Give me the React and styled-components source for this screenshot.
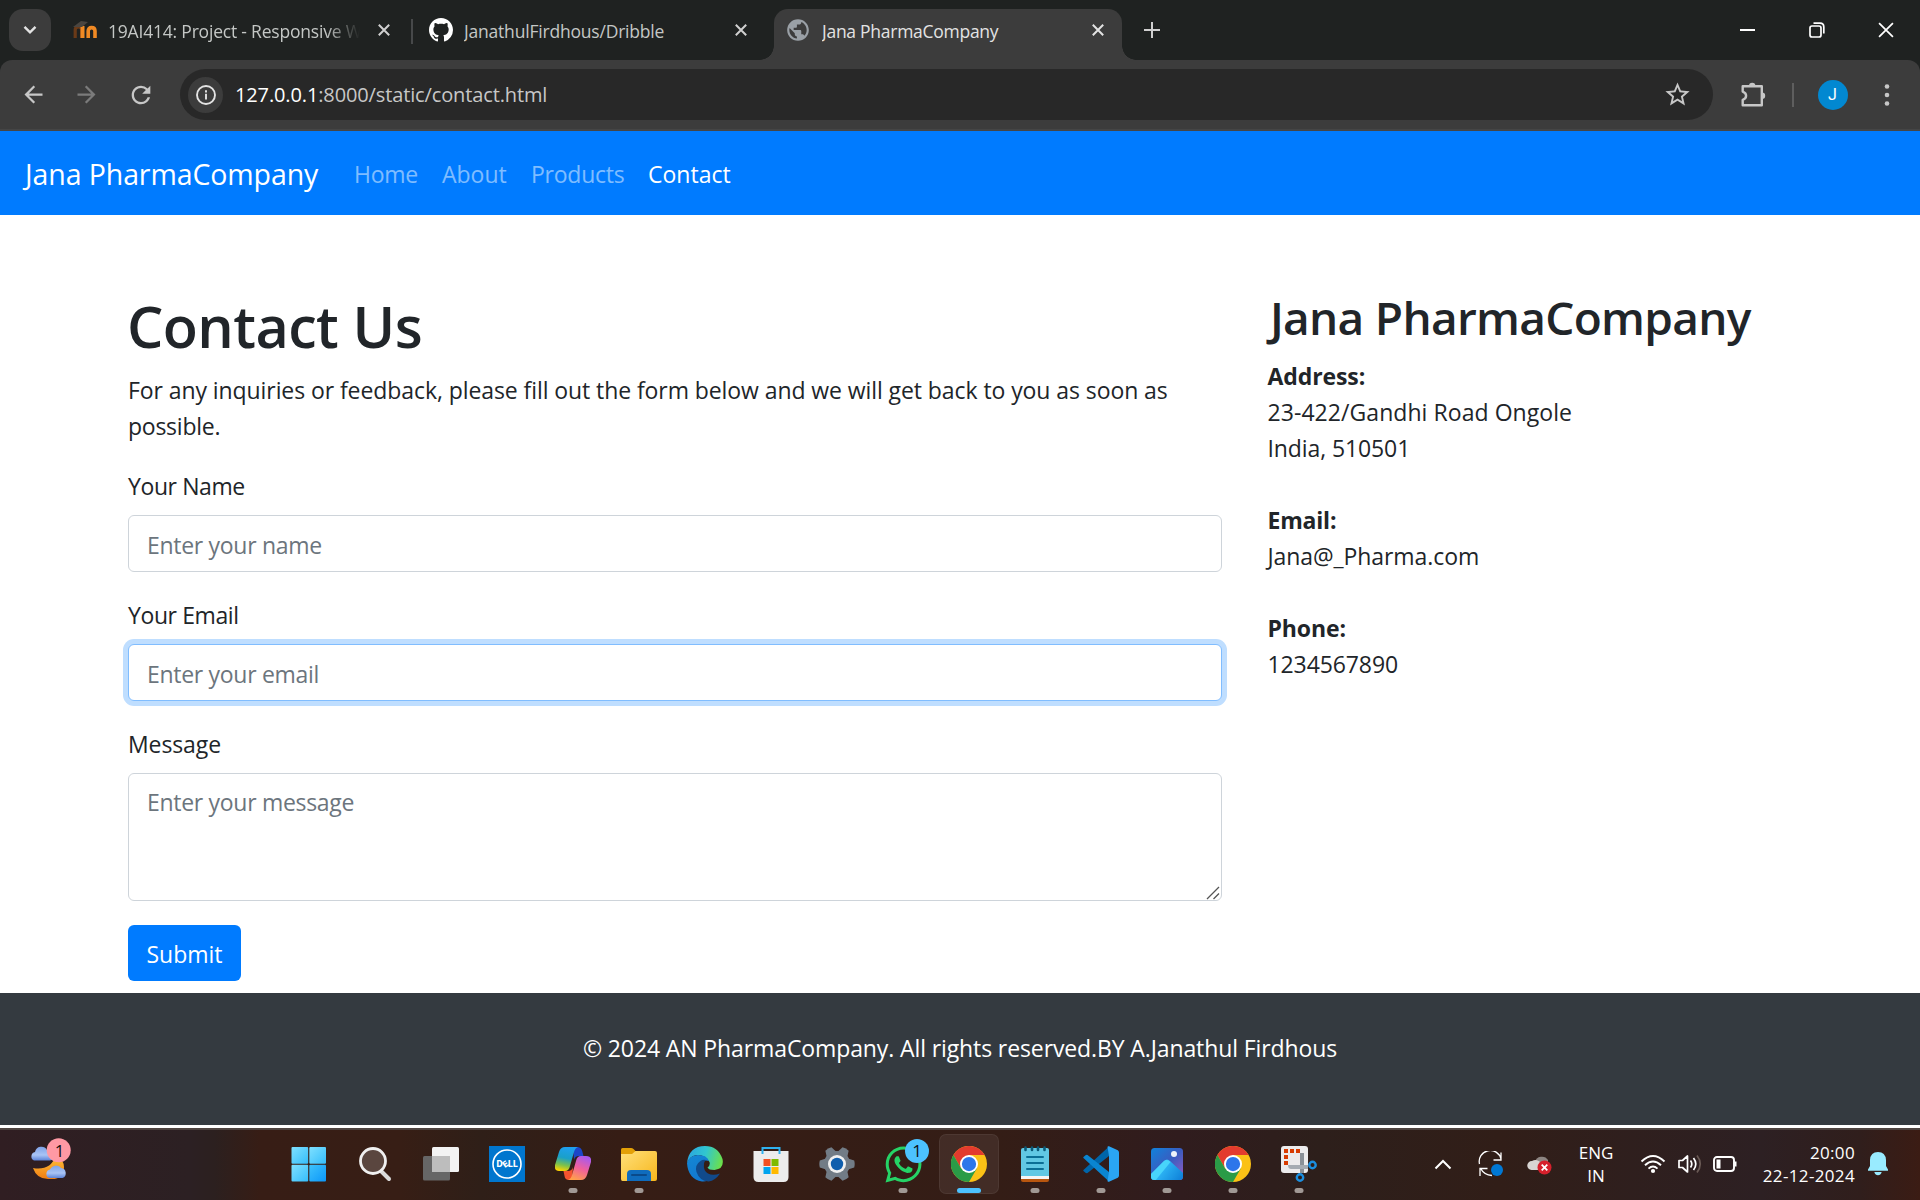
import React from "react";
import styled, { createGlobalStyle, css } from "styled-components";
import { MdPublic, MdArrowBack, MdArrowForward, MdRefresh, MdStarBorder } from "react-icons/md";
import { FaWhatsapp } from "react-icons/fa";

const GlobalStyle = createGlobalStyle`
  *, *::before, *::after { box-sizing: border-box; }
  body {
    margin: 0;
    overflow: hidden;
    background: #fff;
    color: #212529;
    font-family: "Open Sans", "Noto Sans", sans-serif;
    font-size: 23px;
    line-height: 36px;
  }
  svg { display: block; flex: none; }
`;

const Screen = styled.div`
  display: flex;
  flex-direction: column;
  width: 1920px;
  height: 1200px;
  overflow: hidden;
`;

/* ---------- Browser tab strip ---------- */

const TabStrip = styled.div`
  display: flex;
  align-items: center;
  flex: none;
  height: 60px;
  padding-left: 9px;
  background: #1f2221;
`;

const TabSearch = styled.div`
  display: grid;
  place-items: center;
  width: 42px;
  height: 42px;
  margin-right: 9px;
  border-radius: 14px;
  background: #3c3c3c;
`;

const Tab = styled.div`
  position: relative;
  display: flex;
  align-items: center;
  height: 51px;
  margin-top: 9px;
  padding: 0 ${(p) => p.$end}px 9px ${(p) => p.$start}px;
  width: ${(p) => p.$w}px;
  color: #c4c7c5;
  font-size: 17.5px;
  line-height: 24px;
  ${(p) =>
    p.$active &&
    css`
      color: #e3e3e3;
      background: #3c3c3c;
      border-radius: 14px 14px 0 0;
      &::before,
      &::after {
        content: "";
        position: absolute;
        bottom: 0;
        width: 14px;
        height: 14px;
      }
      &::before {
        right: 100%;
        background: radial-gradient(circle at 0 0, transparent 13.5px, #3c3c3c 14px);
      }
      &::after {
        left: 100%;
        background: radial-gradient(circle at 100% 0, transparent 13.5px, #3c3c3c 14px);
      }
    `}
`;

const TabTitle = styled.span`
  flex: 1;
  margin-left: 11px;
  padding-top: 2px;
  white-space: nowrap;
  overflow: hidden;
  letter-spacing: ${(p) => p.$ls || 0}px;
  ${(p) =>
    p.$fade &&
    css`
      margin-right: 18px;
      mask-image: linear-gradient(to right, #000 calc(100% - 34px), transparent);
    `}
`;

const TabDivider = styled.div`
  width: 2px;
  height: 25px;
  margin-top: 2px;
  background: #47494a;
`;

const NewTab = styled.div`
  display: grid;
  place-items: center;
  width: 60px;
  height: 60px;
`;

const WindowControls = styled.div`
  display: flex;
  margin-left: auto;
`;

const WindowButton = styled.div`
  display: grid;
  place-items: center;
  width: 69px;
  height: 60px;
`;

/* ---------- Browser toolbar ---------- */

const ToolbarBack = styled.div`
  flex: none;
  background: #1f2221;
`;

const Toolbar = styled.div`
  display: flex;
  align-items: center;
  height: 71px;
  padding-left: 3px;
  background: #3c3c3c;
  border-bottom: 2px solid #454545;
  border-radius: 12px 12px 0 0;
`;

const ToolButton = styled.div`
  display: grid;
  place-items: center;
  width: ${(p) => p.$w || 54}px;
  height: 51px;
  color: ${(p) => (p.$dim ? "#7b7b7b" : "#c7c7c7")};
`;

const AddressBar = styled.div`
  display: flex;
  align-items: center;
  width: 1533px;
  height: 51px;
  margin-left: 9px;
  padding: 0 21px 0 8px;
  border-radius: 26px;
  background: #282828;
  color: #c7c7c7;
`;

const SiteInfo = styled.div`
  display: grid;
  place-items: center;
  width: 35px;
  height: 36px;
  border-radius: 50%;
  background: #3c3c3c;
`;

const Url = styled.div`
  flex: 1;
  margin-left: 12px;
  font-size: 20px;
  line-height: 28px;
  letter-spacing: -0.13px;
  b {
    font-weight: 400;
    color: #fff;
  }
`;

const ToolDivider = styled.div`
  width: 2px;
  height: 24px;
  background: #5e5e5e;
`;

const Avatar = styled.div`
  display: grid;
  place-items: center;
  width: 30px;
  height: 30px;
  border-radius: 50%;
  background: #0288d1;
  color: #fff;
  font-family: Roboto, sans-serif;
  font-size: 16px;
  line-height: 30px;
`;

/* ---------- Site ---------- */

const Navbar = styled.nav`
  display: flex;
  align-items: center;
  flex: none;
  height: 84px;
  padding-left: 25px;
  background: #007bff;
`;

const Brand = styled.span`
  width: 317px;
  margin-top: 2px;
  color: #fff;
  font-size: 28.5px;
  line-height: 45px;
  letter-spacing: ${(p) => p.$ls}px;
  white-space: nowrap;
`;

const NavLinks = styled.div`
  display: flex;
  gap: 24px;
  margin-top: 2px;
  padding-left: 12px;
`;

const NavLink = styled.span`
  width: ${(p) => p.$w}px;
  white-space: nowrap;
  color: ${(p) => (p.$active ? "#fff" : "rgba(255, 255, 255, 0.5)")};
  letter-spacing: ${(p) => p.$ls || 0}px;
`;

const Main = styled.main`
  display: flex;
  align-items: flex-start;
  flex: none;
  height: 778px;
  padding: 72px 128px 0;
  gap: 45px;
`;

const FormColumn = styled.section`
  width: 1094px;
`;

const InfoColumn = styled.section`
  width: 520px;
`;

const Title = styled.h1`
  margin: 0 0 12px -1px;
  padding-top: 3px;
  height: 72px;
  font-size: 57.5px;
  line-height: 72px;
  font-weight: 600;
  letter-spacing: ${(p) => p.$ls}px;
`;

const Subtitle = styled.h2`
  margin: 0 0 12px;
  padding: 1px 0 0 3px;
  height: 58px;
  font-size: 46px;
  line-height: 58px;
  font-weight: 600;
  letter-spacing: ${(p) => p.$ls}px;
  white-space: nowrap;
`;

const Paragraph = styled.p`
  margin: 0 0 24px;
  padding-top: 1px;
  height: 72px;
  white-space: nowrap;
`;

const Line = styled.span`
  display: block;
  letter-spacing: ${(p) => p.$ls || 0}px;
  font-weight: ${(p) => (p.$bold ? 700 : 400)};
`;

const Details = styled.div`
  display: grid;
  gap: 36px;
  padding: 1px 0 0 0.5px;
  white-space: nowrap;
`;

const Field = styled.div`
  position: relative;
  display: flex;
  flex-direction: column;
  margin-bottom: 24px;
`;

const Label = styled.label`
  height: 36px;
  margin-bottom: 12px;
  padding-top: 1px;
  letter-spacing: ${(p) => p.$ls || 0}px;
`;

const control = css`
  display: block;
  width: 100%;
  margin: 0;
  border: 1px solid #ced4da;
  border-radius: 6px;
  outline: none;
  background: #fff;
  color: #495057;
  font: inherit;
  letter-spacing: -0.3px;
  &::placeholder {
    color: #6c757d;
    opacity: 1;
  }
`;

const Input = styled.input`
  ${control}
  height: 57px;
  padding: 11px 18px 9px;
  ${(p) =>
    p.$focused &&
    css`
      border-color: #80bdff;
      box-shadow: 0 0 0 5px #bfdeff;
    `}
`;

const TextArea = styled.textarea`
  ${control}
  height: 128px;
  padding: 10px 18px;
  resize: none;
`;

const Grip = styled.svg`
  position: absolute;
  right: 2px;
  bottom: 1px;
`;

const Submit = styled.button`
  display: block;
  width: 113px;
  height: 56px;
  padding: 2px 0 0;
  border: 0;
  border-radius: 6px;
  background: #007bff;
  color: #fff;
  font: inherit;
`;

const Footer = styled.footer`
  flex: none;
  height: 132px;
  padding-top: 37px;
  background: #343a40;
  color: #fff;
  text-align: center;
  letter-spacing: ${(p) => p.$ls || 0}px;
`;

/* ---------- Taskbar ---------- */

const Taskbar = styled.div`
  display: flex;
  flex: none;
  height: 72px;
  margin-top: 3px;
  border-top: 2px solid #4e4340;
  background: linear-gradient(
    90deg,
    #301e22 0,
    #2c2023 190px,
    #2c201f 215px,
    #371d15 260px,
    #371e15 400px,
    #2f1f18 480px,
    #361d15 620px,
    #341d16 1000px,
    #301c1e 1180px,
    #2d1f1b 1320px,
    #311e18 1500px,
    #2d2023 1760px,
    #301e1c 1860px,
    #3b1c14 1920px
  );
`;

const Weather = styled.div`
  width: 276px;
  padding: 12px 0 0 29px;
  svg {
    overflow: visible;
  }
`;

const Apps = styled.div`
  display: flex;
`;

const AppSlot = styled.div`
  position: relative;
  display: grid;
  place-items: center;
  width: 60px;
  height: 60px;
  margin: 4px 3px 0;
  border-radius: 7px;
  ${(p) =>
    p.$active &&
    css`
      background: rgba(255, 255, 255, 0.07);
      box-shadow: inset 0 0 0 1px rgba(255, 255, 255, 0.06);
    `}
`;

const RunMark = styled.span`
  position: absolute;
  left: 50%;
  bottom: 1px;
  width: ${(p) => (p.$active ? 24 : 9)}px;
  height: 5px;
  transform: translateX(-50%);
  border-radius: 3px;
  background: ${(p) => (p.$active ? "#4cc2ff" : "#a19995")};
`;

const Badge = styled.span`
  position: absolute;
  top: 5px;
  right: 4px;
  width: 24px;
  height: 24px;
  border-radius: 50%;
  background: #4cc2ff;
  color: #111;
  font-size: 17px;
  line-height: 24px;
  text-align: center;
`;

const Tray = styled.div`
  display: flex;
  align-items: center;
  margin-left: auto;
  height: 68px;
  padding-right: 19px;
  color: #fff;
  font-size: 17px;
  line-height: 23px;
`;

const TrayItem = styled.div`
  display: grid;
  place-items: center;
  width: ${(p) => p.$w}px;
`;

const TrayText = styled.div`
  width: ${(p) => p.$w}px;
  padding-bottom: 1px;
  text-align: ${(p) => p.$align || "center"};
  white-space: nowrap;
  letter-spacing: ${(p) => p.$ls || 0}px;
`;

/* ---------- Drawings ---------- */

const Cross = ({ size = 12, w = 2, color = "#d0d0d0" }) => (
  <svg width={size} height={size} viewBox="0 0 12 12">
    <path d="M.8.8l10.4 10.4M11.2.8L.8 11.2" stroke={color} strokeWidth={w} />
  </svg>
);

const Moodle = () => (
  <svg width="25" height="24" viewBox="0 0 25 24">
    <path d="M3.2 20V12q0-3.2 3.2-3.2T9.7 12v8" fill="none" stroke="#6a3a18" strokeWidth="3.2" />
    <path d="M10.5 20V8" stroke="#f08a24" strokeWidth="4" />
    <path d="M16.2 20v-7q0-3.4 3.4-3.4T23 13v7" fill="none" stroke="#f08a24" strokeWidth="3.600" />
    <path d="M1 9L9 3l7 1-6 5z" fill="#4a4540" />
  </svg>
);

const Github = () => (
  <svg width="24" height="24" viewBox="0 0 16 16" fill="#fff">
    <path d="M8 0C3.580 0 0 3.580 0 8c0 3.540 2.290 6.530 5.470 7.590.4.070.550-.170.550-.380 0-.190-.010-.820-.010-1.490-2.010.370-2.530-.490-2.690-.940-.090-.230-.480-.940-.820-1.130-.280-.150-.680-.520-.010-.530.630-.010 1.080.580 1.230.820.720 1.210 1.870.870 2.330.660.070-.520.280-.870.510-1.070-1.780-.2-3.640-.890-3.640-3.950 0-.870.310-1.590.820-2.150-.080-.2-.360-1.020.080-2.120 0 0 .670-.210 2.200.820.640-.180 1.320-.270 2-.270s1.360.090 2 .270c1.530-1.040 2.200-.820 2.200-.820.440 1.100.160 1.920.080 2.120.510.560.820 1.270.820 2.150 0 3.070-1.870 3.750-3.650 3.950.290.250.540.730.540 1.480 0 1.070-.010 1.930-.010 2.200 0 .210.150.460.550.380A8.010 8.010 0 0 0 16 8c0-4.420-3.580-8-8-8z" />
  </svg>
);

const Puzzle = () => (
  <svg width="26" height="28" viewBox="0 0 26 28" fill="none" stroke="#c7c7c7" strokeWidth="2.400">
    <path d="M2.700 5.200h19.100v19H2.700v-5.400q3.400-1.200 3.400-4.100t-3.400-4.100z" strokeLinejoin="round" />
    <path d="M9 5a3.200 3.200 0 0 1 6.400 0zM22 11.500a3.200 3.200 0 0 1 0 6.400z" fill="#c7c7c7" stroke="none" />
  </svg>
);

const WeatherIcon = () => (
  <svg width="44" height="46" viewBox="0 0 44 46">
    <defs>
      <linearGradient id="cloud" x1="0" y1="0" x2="0" y2="1">
        <stop offset="0" stopColor="#7fa3e8" />
        <stop offset=".6" stopColor="#a9c4f5" />
        <stop offset="1" stopColor="#5c83d8" />
      </linearGradient>
      <linearGradient id="moon" x1="0" y1="0" x2="0" y2="1">
        <stop offset="0" stopColor="#ffc23a" />
        <stop offset="1" stopColor="#f07d12" />
      </linearGradient>
    </defs>
    <path d="M4 26q17 3 23-12 8 4 8 11 0 13-14 12Q8 38 4 26z" fill="url(#moon)" />
    <path d="M5 18.500a4.500 4.500 0 0 1 1-8.500 6.500 6.500 0 0 1 12-2 5 5 0 0 1 3 10.500z" fill="url(#cloud)" />
    <path d="M20 36a4.500 4.500 0 0 1 1-8.500 6.500 6.500 0 0 1 11-1.500 5.200 5.200 0 0 1 1.500 10z" fill="url(#cloud)" />
    <circle cx="29.700" cy="8.300" r="12" fill="#ff99a4" />
    <text x="30.500" y="14.500" fontSize="17" fill="#111" textAnchor="middle">1</text>
  </svg>
);

const Start = () => (
  <svg width="36" height="36" viewBox="0 0 36 36">
    <defs>
      <linearGradient id="win" x1="0" y1="0" x2="1" y2="1">
        <stop offset="0" stopColor="#7fe0ff" />
        <stop offset="1" stopColor="#35bdfb" />
      </linearGradient>
      <linearGradient id="win2" x1="0" y1="0" x2="1" y2="1">
        <stop offset="0" stopColor="#3ec2fc" />
        <stop offset="1" stopColor="#0c97f8" />
      </linearGradient>
    </defs>
    <rect x=".5" y="1" width="16.700" height="16.700" rx="1" fill="url(#win)" />
    <rect x="18.300" y="1" width="16.700" height="16.700" rx="1" fill="url(#win)" />
    <rect x=".5" y="18.800" width="16.700" height="16.700" rx="1" fill="url(#win)" />
    <rect x="18.300" y="18.800" width="16.700" height="16.700" rx="1" fill="url(#win2)" />
  </svg>
);

const Search = () => (
  <svg width="36" height="36" viewBox="0 0 36 36">
    <path d="M24 25l8 8" stroke="#dcdcdc" strokeWidth="4" strokeLinecap="round" />
    <circle cx="16" cy="15" r="12.500" fill="#5a463f" stroke="#f0f0f0" strokeWidth="2.800" />
  </svg>
);

const TaskView = () => (
  <svg width="36" height="36" viewBox="0 0 36 36">
    <rect x="9" y="1" width="27" height="25" rx="1.500" fill="#f3f3f3" />
    <rect x="0" y="10" width="27" height="24.500" rx="1.500" fill="#666" />
    <path d="M9 10h18v16H9z" fill="#bdbdbd" />
  </svg>
);

const Dell = () => (
  <svg width="36" height="36" viewBox="0 0 36 36">
    <path d="M0 0h36v36H0z" fill="#0076ce" />
    <circle cx="18" cy="18" r="14" fill="none" stroke="#fff" strokeWidth="1.600" />
    <g fill="#fff" fontFamily="Inter, sans-serif" fontWeight="800" fontSize="8.500" textAnchor="middle">
      <text x="10.500" y="21">D</text>
      <text x="16.500" y="21" transform="rotate(-35 16.500 18)">E</text>
      <text x="21.500" y="21">L</text>
      <text x="26.500" y="21">L</text>
    </g>
  </svg>
);

const Copilot = () => (
  <svg width="36" height="36" viewBox="0 0 36 36">
    <defs>
      <linearGradient id="cpA" x1=".5" y1="0" x2=".3" y2="1">
        <stop offset="0" stopColor="#1f9ff0" />
        <stop offset=".45" stopColor="#1aa0c8" />
        <stop offset=".75" stopColor="#7cc14c" />
        <stop offset="1" stopColor="#ffd400" />
      </linearGradient>
      <linearGradient id="cpB" x1=".7" y1="0" x2=".3" y2="1">
        <stop offset="0" stopColor="#a659f0" />
        <stop offset=".5" stopColor="#f0609c" />
        <stop offset="1" stopColor="#ffa04a" />
      </linearGradient>
    </defs>
    <path d="M18 1h4q4 0 5.200 4l1.300 5H24q-4 0-5 4z" fill="#1b45c8" />
    <path d="M17 34h-3q-4 0-4.500-4l-1-5H13q4 0 5-4z" fill="#f5532f" />
    <path d="M10 1h13q-3 1-4 5l-4 14q-1 5-5 5H4q-5 0-4-6L4 6q1.500-5 6-5z" fill="url(#cpA)" />
    <path d="M26 34H13q3-1 4-5l4-14q1-5 5-5h5q6 0 5 6l-4 13q-1.500 5-6 5z" fill="url(#cpB)" />
  </svg>
);

const Explorer = () => (
  <svg width="36" height="36" viewBox="0 0 36 36">
    <defs>
      <linearGradient id="fold" x1="0" y1="0" x2="1" y2="1">
        <stop offset="0" stopColor="#ffe07a" />
        <stop offset="1" stopColor="#f7b61c" />
      </linearGradient>
    </defs>
    <path d="M0 3.500Q0 2 1.500 2H10q1.500 0 2.500 1l3 3v4H0z" fill="#e3a007" />
    <path d="M0 8h11l3.500-3H34q2 0 2 2v26q0 2-2 2H1.500Q0 35 0 33z" fill="url(#fold)" />
    <path d="M6 35v-7q0-4 4-4h16q4 0 4 4v7z" fill="#0f6cbd" />
    <path d="M11 29h14" stroke="#0a4a8a" strokeWidth="2" strokeLinecap="round" />
  </svg>
);

const Edge = () => (
  <svg width="36" height="36" viewBox="0 0 36 36">
    <defs>
      <linearGradient id="edA" x1="0" y1=".3" x2="1" y2=".5">
        <stop offset="0" stopColor="#2aa5e0" />
        <stop offset=".5" stopColor="#31c6cf" />
        <stop offset="1" stopColor="#6be04c" />
      </linearGradient>
      <linearGradient id="edB" x1=".2" y1="0" x2=".6" y2="1">
        <stop offset="0" stopColor="#1486d4" />
        <stop offset="1" stopColor="#1277cf" />
      </linearGradient>
    </defs>
    <path d="M0 17Q2 0 18 0q13 0 17.500 13 2 10-8 11-6 0-7-2.500 3-2 2-5.500Q18 8 9 9 3 10 0 17z" fill="url(#edA)" />
    <path d="M0 17q3-8 11-8 9 0 11 6-7-2-9 5-1 9 8 14-3 2-6 1.500Q1 33 0 17z" fill="url(#edB)" />
    <path d="M13.500 15q-6 4-4 11 3 9 12 9.500 7-1 11.500-8-7 2.500-12 0-5-3-4-10 0-2 2-3.500-3-1-5.500 1z" fill="#114a8b" />
  </svg>
);

const Store = () => (
  <svg width="36" height="36" viewBox="0 0 36 36">
    <path d="M.5 5h35v26q0 5-5 5h-25q-5 0-5-5z" fill="#ececec" />
    <path d="M9.500 8V2h17v6" fill="none" stroke="#2fb2f0" strokeWidth="2" />
    <path d="M10.500 13h7v7h-7z" fill="#f25022" />
    <path d="M18.500 13h7v7h-7z" fill="#7fba00" />
    <path d="M10.500 21h7v7h-7z" fill="#00a4ef" />
    <path d="M18.500 21h7v7h-7z" fill="#ffb900" />
  </svg>
);

const Settings = () => (
  <svg width="36" height="36" viewBox="0 0 36 36">
    <g fill="#727c86">
      <circle cx="18" cy="18" r="13" />
      {[30, 90, 150, 210, 270, 330].map((angle) => (
        <path key={angle} d="M14.500.8q3.500-1 7 0l2.200 7H12.300z" transform={`rotate(${angle} 18 18)`} />
      ))}
    </g>
    <circle cx="18" cy="18" r="9" fill="#f0f0f0" />
    <circle cx="18" cy="18" r="6.200" fill="#0f5ead" />
  </svg>
);

const Chrome = () => (
  <svg width="36" height="36" viewBox="0 0 48 48">
    <circle cx="24" cy="24" r="24" fill="#fbc116" />
    <path d="M24 12h20.800A24 24 0 0 0 3.200 12L13.600 30z" fill="#e33b2e" />
    <path d="M13.600 30L3.200 12A24 24 0 0 0 24 48l10.400-18z" fill="#2a9b47" />
    <circle cx="24" cy="24" r="12" fill="#fff" />
    <circle cx="24" cy="24" r="9.500" fill="#2d76ea" />
  </svg>
);

const Notepad = () => (
  <svg width="36" height="36" viewBox="0 0 36 36">
    <path d="M4 31h28v3q0 2-2 2H6q-2 0-2-2z" fill="#b8560f" />
    <path d="M4 30h28v3H4z" fill="#f5f5f5" />
    <path d="M4 4q0-2 2-2h24q2 0 2 2v26H4z" fill="#61c8e4" />
    <path d="M8.500 1.500v2.500M15 1.500v2.500M21 1.500v2.500M27.500 1.500v2.500" stroke="#0b5a78" strokeWidth="2.600" strokeLinecap="round" />
    <path d="M10 11h16M10 17h16M10 23h16" stroke="#0b6f96" strokeWidth="2" strokeLinecap="round" />
  </svg>
);

const VsCode = () => (
  <svg width="36" height="36" viewBox="0 0 36 36">
    <path d="M1 23.500L26 .5v9.500L4.500 27q-1 .5-2-.3l-2-1.700q-.7-.8.500-1.500z" fill="#0065a9" />
    <path d="M1 12.500L26 35.500V26L4.500 9q-1-.5-2 .3l-2 1.700q-.7.800.5 1.500z" fill="#0a85d1" />
    <path d="M26 .3l8.800 4Q36 5 36 6.500v23q0 1.500-1.200 2.200L26 35.700q-1.500.3-1.500-.7L26 26V10l-1.500-9q0-1 1.500-.7z" fill="#2aa5f3" />
  </svg>
);

const Photos = () => (
  <svg width="36" height="36" viewBox="0 0 36 36">
    <defs>
      <linearGradient id="ph" x1="0" y1="0" x2="1" y2="1">
        <stop offset="0" stopColor="#1083dc" />
        <stop offset=".5" stopColor="#3a5cc0" />
        <stop offset="1" stopColor="#9a5ac0" />
      </linearGradient>
      <linearGradient id="ph2" x1="0" y1=".5" x2="1" y2="1">
        <stop offset="0" stopColor="#38c8ff" />
        <stop offset="1" stopColor="#0a78d4" />
      </linearGradient>
      <clipPath id="phc">
        <rect x="2" y="2" width="32" height="32" rx="3.500" />
      </clipPath>
    </defs>
    <g clipPath="url(#phc)">
      <path d="M2 2h32v32H2z" fill="url(#ph)" />
      <path d="M2 28l13-13q3-3 6 0l14 13v8H2z" fill="url(#ph2)" />
      <path d="M2 28l12.500-12.500q3.500-3 7 .5L6 35H2z" fill="#48d4fb" />
      <circle cx="25" cy="8" r="3" fill="#eef3fa" />
    </g>
  </svg>
);

const Snip = () => (
  <svg width="36" height="36" viewBox="0 0 36 36">
    <rect x="0" y="0" width="27" height="27" rx="3" fill="#ecebec" />
    <path d="M3 3h4v4H3zM9 3h4v4H9zM15 3h4v4h-4zM3 9h4v4H3zM3 15h4v4H3z" fill="#d83b01" />
    <path d="M19 7h4v20h-4z" fill="#8a9097" />
    <path d="M7 19h20v4H10q-3 0-3-4z" fill="#a5abb2" />
    <circle cx="31.500" cy="19" r="3.200" fill="none" stroke="#1b8fe0" strokeWidth="2.400" />
    <circle cx="19" cy="31.500" r="3.200" fill="none" stroke="#1b8fe0" strokeWidth="2.400" />
  </svg>
);

const WhatsApp = () => (
  <>
    <FaWhatsapp size={41} color="#25d366" />
    <Badge>1</Badge>
  </>
);

const apps = [
  { icon: Start },
  { icon: Search },
  { icon: TaskView },
  { icon: Dell },
  { icon: Copilot, running: true },
  { icon: Explorer, running: true },
  { icon: Edge },
  { icon: Store },
  { icon: Settings },
  { icon: WhatsApp, running: true },
  { icon: Chrome, running: true, active: true },
  { icon: Notepad, running: true },
  { icon: VsCode, running: true },
  { icon: Photos, running: true },
  { icon: Chrome, running: true },
  { icon: Snip, running: true },
];

const SyncIcon = () => (
  <svg width="26" height="26" viewBox="0 0 26 26" fill="none" stroke="#fff" strokeWidth="1.300">
    <path d="M1.500 13A11 11 0 0 1 23 8M23 1.500V9h-7.500M2 25v-7.500h7.500M3 18q3 6 11 6.500" />
    <circle cx="19" cy="19" r="6" fill="#0078d4" stroke="none" />
  </svg>
);

const CloudError = () => (
  <svg width="25" height="22" viewBox="0 0 25 22">
    <path d="M8 9a7 6.500 0 0 1 13-2v8H9z" fill="#8d8582" />
    <path d="M4.500 17a4.500 4.500 0 0 1 .5-9 6.500 6.500 0 0 1 9 2v7z" fill="#d8d5d3" />
    <circle cx="17.500" cy="14.500" r="7" fill="#d6202c" />
    <path d="M14.700 11.700l5.600 5.600M20.300 11.700l-5.600 5.600" stroke="#fff" strokeWidth="1.800" />
  </svg>
);

const Wifi = () => (
  <svg width="26" height="20" viewBox="0 0 26 20" fill="none" stroke="#fff" strokeWidth="1.900">
    <path d="M1.500 7.500q11.500-11 23 0M5 11.200q8-7.400 16 0M8.500 14.600q4.500-4.200 9 0" />
    <circle cx="13" cy="17" r="2.100" fill="#fff" stroke="none" />
  </svg>
);

const Speaker = () => (
  <svg width="26" height="20" viewBox="0 0 26 20" fill="none" stroke="#fff" strokeWidth="1.700">
    <path d="M2 6.500h3.500l5-4.500v16l-5-4.500H2z" strokeLinejoin="round" />
    <path d="M13.500 6.500q2.600 3.500 0 7M16.500 4q4.600 6 0 12" />
    <path d="M20 1.500q6.500 8.500 0 17" stroke="#6a5a55" />
  </svg>
);

const Battery = () => (
  <svg width="26" height="18" viewBox="0 0 26 18" fill="none">
    <rect x="2" y="2" width="20" height="14" rx="3" stroke="#fff" strokeWidth="1.900" />
    <path d="M4.500 4.500h4v9h-4zM22.500 6.500h2v5h-2z" fill="#fff" />
  </svg>
);

const Bell = () => (
  <svg width="20" height="24" viewBox="0 0 20 24" fill="#99ebff">
    <path d="M10 0q7.500 0 8 8v6l2 3.500v1.200H0v-1.200L2 14V8q.5-8 8-8zM6.300 20h7.400q-1 3.300-3.700 3.300T6.300 20z" />
  </svg>
);

export default function App() {
  return (
    <Screen>
      <GlobalStyle />

      <TabStrip>
        <TabSearch>
          <svg width="14" height="10" viewBox="0 0 14 10" fill="none" stroke="#e3e3e3" strokeWidth="2.400">
            <path d="M1.500 1.800L7 7.300l5.500-5.500" />
          </svg>
        </TabSearch>
        <Tab $w={351} $start={12} $end={21}>
          <Moodle />
          <TabTitle $fade $ls={-0.2}>19AI414: Project - Responsive Web</TabTitle>
          <Cross />
        </Tab>
        <TabDivider />
        <Tab $w={361} $start={16} $end={27}>
          <Github />
          <TabTitle $ls={-0.2}>JanathulFirdhous/Dribble</TabTitle>
          <Cross />
        </Tab>
        <Tab $w={348} $start={11} $end={18} $active>
          <MdPublic size={26} color="#9aa0a6" />
          <TabTitle $ls={-0.27}>Jana PharmaCompany</TabTitle>
          <Cross color="#e3e3e3" />
        </Tab>
        <NewTab>
          <svg width="16" height="16" viewBox="0 0 16 16" stroke="#d0d0d0" strokeWidth="2">
            <path d="M8 0v16M0 8h16" />
          </svg>
        </NewTab>
        <WindowControls>
          <WindowButton>
            <svg width="15" height="2" viewBox="0 0 15 2">
              <path d="M0 0h15v2H0z" fill="#fff" />
            </svg>
          </WindowButton>
          <WindowButton>
            <svg width="16" height="16" viewBox="0 0 16 16" fill="none" stroke="#fff" strokeWidth="1.700">
              <rect x="1" y="4" width="11" height="11" rx="2" />
              <path d="M4.500 1.200H11q3.800 0 3.800 3.800v6.500" />
            </svg>
          </WindowButton>
          <WindowButton>
            <Cross size={16} w={1.3} color="#fff" />
          </WindowButton>
        </WindowControls>
      </TabStrip>

      <ToolbarBack>
        <Toolbar>
          <ToolButton $w={60}>
            <MdArrowBack size={27} />
          </ToolButton>
          <ToolButton $w={47} $dim>
            <MdArrowForward size={27} />
          </ToolButton>
          <ToolButton $w={61}>
            <MdRefresh size={28} />
          </ToolButton>
          <AddressBar>
            <SiteInfo>
              <svg width="20" height="20" viewBox="0 0 20 20" fill="none" stroke="#e3e3e3" strokeWidth="1.900">
                <circle cx="10" cy="10" r="9" />
                <path d="M10 8.800v5.700M10 5.300v2.100" />
              </svg>
            </SiteInfo>
            <Url>
              <b>127.0.0.1</b>:8000/static/contact.html
            </Url>
            <MdStarBorder size={29} />
          </AddressBar>
          <ToolButton $w={79}>
            <Puzzle />
          </ToolButton>
          <ToolDivider />
          <ToolButton $w={77}>
            <Avatar>J</Avatar>
          </ToolButton>
          <ToolButton $w={32}>
            <svg width="6" height="24" viewBox="0 0 6 24" fill="#c7c7c7">
              <circle cx="3" cy="3.500" r="2.300" />
              <circle cx="3" cy="12" r="2.300" />
              <circle cx="3" cy="20.500" r="2.300" />
            </svg>
          </ToolButton>
        </Toolbar>
      </ToolbarBack>

      <Navbar>
        <Brand $ls={-0.1}>Jana PharmaCompany</Brand>
        <NavLinks>
          <NavLink $w={64} $ls={-0.3}>Home</NavLink>
          <NavLink $w={65}>About</NavLink>
          <NavLink $w={93} $ls={-0.25}>Products</NavLink>
          <NavLink $w={82} $active>Contact</NavLink>
        </NavLinks>
      </Navbar>

      <Main>
        <FormColumn>
          <Title $ls={-0.6}>Contact Us</Title>
          <Paragraph>
            <Line $ls={-0.08}>
              For any inquiries or feedback, please fill out the form below and we will get back to you as soon as
            </Line>
            <Line $ls={-0.25}>possible.</Line>
          </Paragraph>
          <Field>
            <Label $ls={-0.4}>Your Name</Label>
            <Input placeholder="Enter your name" />
          </Field>
          <Field>
            <Label $ls={-0.4}>Your Email</Label>
            <Input $focused placeholder="Enter your email" />
          </Field>
          <Field>
            <Label $ls={-0.1}>Message</Label>
            <TextArea placeholder="Enter your message" />
            <Grip width="14" height="14" viewBox="0 0 14 14" stroke="#555" strokeWidth="1.300">
              <path d="M1 13L13 1M7.500 13L13 7.500" />
            </Grip>
          </Field>
          <Submit>Submit</Submit>
        </FormColumn>
        <InfoColumn>
          <Subtitle $ls={-0.7}>Jana PharmaCompany</Subtitle>
          <Details>
            <div>
              <Line $bold $ls={-0.1}>Address:</Line>
              <Line $ls={0.06}>23-422/Gandhi Road Ongole</Line>
              <Line $ls={-0.1}>India, 510501</Line>
            </div>
            <div>
              <Line $bold $ls={-0.2}>Email:</Line>
              <Line $ls={-0.08}>Jana@_Pharma.com</Line>
            </div>
            <div>
              <Line $bold $ls={-0.1}>Phone:</Line>
              <Line $ls={-0.1}>1234567890</Line>
            </div>
          </Details>
        </InfoColumn>
      </Main>

      <Footer $ls={-0.11}>© 2024 AN PharmaCompany. All rights reserved.BY A.Janathul Firdhous</Footer>

      <Taskbar>
        <Weather>
          <WeatherIcon />
        </Weather>
        <Apps>
          {apps.map(({ icon: Icon, running, active }, i) => (
            <AppSlot key={i} $active={active}>
              <Icon />
              {running && <RunMark $active={active} />}
            </AppSlot>
          ))}
        </Apps>
        <Tray>
          <TrayItem $w={48}>
            <svg width="18" height="11" viewBox="0 0 18 11" fill="none" stroke="#fff" strokeWidth="2">
              <path d="M1.500 9.500L9 2l7.500 7.500" />
            </svg>
          </TrayItem>
          <TrayItem $w={48}>
            <SyncIcon />
          </TrayItem>
          <TrayItem $w={48}>
            <CloudError />
          </TrayItem>
          <TrayText $w={66}>
            ENG
            <br />
            IN
          </TrayText>
          <TrayItem $w={48}>
            <Wifi />
          </TrayItem>
          <TrayItem $w={24}>
            <Speaker />
          </TrayItem>
          <TrayItem $w={48}>
            <Battery />
          </TrayItem>
          <TrayText $w={106} $align="right" $ls={0.35}>
            20:00
            <br />
            22-12-2024
          </TrayText>
          <TrayItem $w={46}>
            <Bell />
          </TrayItem>
        </Tray>
      </Taskbar>
    </Screen>
  );
}
